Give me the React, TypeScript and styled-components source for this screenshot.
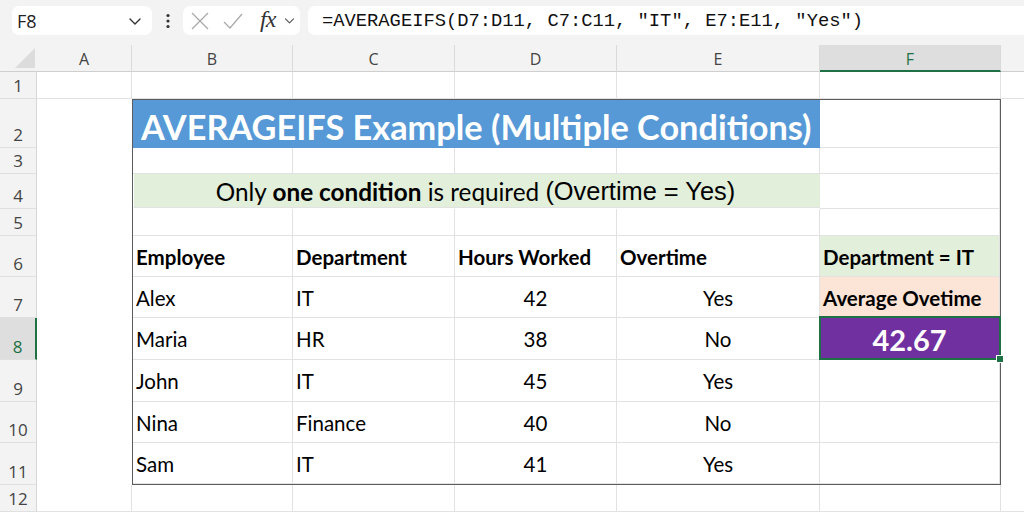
import React from 'react'
import styled, { createGlobalStyle } from 'styled-components'

const GlobalStyle = createGlobalStyle`
  html, body {
    margin: 0;
    padding: 0;
    background: #f3f3f3;
  }
  body {
    width: 1024px;
    height: 512px;
    overflow: hidden;
    font-family: "Open Sans", "Noto Sans", sans-serif;
  }
`

const GREEN = '#1e7145'
const GRID = '#e2e2e2'

const Page = styled.div`
  width: 1024px;
  height: 512px;
  display: flex;
  flex-direction: column;
  overflow: hidden;
`

const Toolbar = styled.div`
  height: 45px;
  flex: none;
  display: flex;
  align-items: flex-start;
  padding: 6px 0 0 12px;
  box-sizing: border-box;
`

const Box = styled.div<{ $w?: number }>`
  height: 29px;
  ${(p) => (p.$w ? `width: ${p.$w}px;` : 'flex: 1;')}
  flex-shrink: 0;
  background: #fff;
  border-radius: 7px;
  display: flex;
  align-items: center;
  box-sizing: border-box;
`

const NameBox = styled(Box)`
  justify-content: space-between;
  padding: 0 9px 0 5px;
  font-size: 18px;
  color: #222;
`

const Kebab = styled.div`
  width: 31px;
  height: 29px;
  display: flex;
  align-items: center;
  justify-content: center;
`

const FxBox = styled(Box)`
  padding: 0 3px 0 7px;
`

const Fx = styled.span`
  font-family: "Liberation Serif", serif;
  font-style: italic;
  font-size: 24px;
  color: #333;
  margin: 0 8px 2px 16px;
  letter-spacing: -1px;
`

const Formula = styled(Box)`
  margin-left: 8px;
  margin-right: -12px;
  padding-left: 14px;
  font-family: "Liberation Mono", monospace;
  font-size: 18.8px;
  color: #111;
  white-space: pre;
`

const Sheet = styled.div`
  display: grid;
  grid-template-columns: 37px 95px 161px 162px 162px 203px 181px 1fr;
  grid-template-rows: 27px 27px 49px 26px 35px 27px 41px 41px 42px 42px 41px 42px 27px;
  background: #fff;
  flex: 1;
`

const Corner = styled.div`
  background: #f3f3f3;
  border-bottom: 1px solid #cfcfcf;
  position: relative;
  box-sizing: border-box;
  &::after {
    content: '';
    position: absolute;
    right: 2px;
    bottom: 3px;
    border-left: 20px solid transparent;
    border-bottom: 20px solid #dcdcdc;
  }
`

const ColHead = styled.div<{ $sel?: boolean }>`
  background: ${(p) => (p.$sel ? '#dedede' : '#f3f3f3')};
  border-right: 1px solid #dadada;
  border-bottom: ${(p) => (p.$sel ? `2px solid ${GREEN}` : '1px solid #cfcfcf')};
  box-sizing: border-box;
  display: flex;
  align-items: center;
  justify-content: center;
  font-size: 16px;
  color: ${(p) => (p.$sel ? GREEN : '#444')};
  padding-top: 2px;
`

const RowHead = styled.div<{ $sel?: boolean }>`
  background: ${(p) => (p.$sel ? '#dedede' : '#f3f3f3')};
  border-bottom: 1px solid #e0e0e0;
  border-right: ${(p) => (p.$sel ? `2px solid ${GREEN}` : '1px solid #d6d6d6')};
  box-sizing: border-box;
  display: flex;
  align-items: flex-end;
  justify-content: center;
  padding-bottom: 4px;
  font-size: 17px;
  line-height: 1;
  color: ${(p) => (p.$sel ? GREEN : '#444')};
`

const GridCell = styled.div`
  border-right: 1px solid ${GRID};
  border-bottom: 1px solid ${GRID};
  box-sizing: border-box;
`

const Blank = styled.div<{ $col: string; $row: string }>`
  grid-column: ${(p) => p.$col};
  grid-row: ${(p) => p.$row};
  background: #fff;
`

const Table = styled.div`
  grid-column: 3 / 8;
  grid-row: 3 / 13;
  border: 1px solid #5c5c5c;
  display: grid;
  grid-template-columns: 160px 162px 162px 203px 180px;
  grid-template-rows: 48px 26px 35px 27px 41px 41px 42px 42px 41px 41px;
`

const Cell = styled.div<{ $bg?: string; $center?: boolean; $bold?: boolean; $span?: number }>`
  grid-column: span ${(p) => p.$span ?? 1};
  background: ${(p) => p.$bg ?? '#fff'};
  border-right: 1px solid ${GRID};
  border-bottom: 1px solid ${GRID};
  box-sizing: border-box;
  display: flex;
  align-items: center;
  justify-content: ${(p) => (p.$center ? 'center' : 'flex-start')};
  padding: 1px 3px 0;
  font-family: Lato, "Open Sans", sans-serif;
  font-size: 20.5px;
  font-weight: ${(p) => (p.$bold ? 700 : 400)};
  color: #000;
  white-space: nowrap;
`

const Title = styled(Cell)`
  background: #5699d6;
  border-right: none;
  border-bottom: none;
  color: #fff;
  font-size: 34.3px;
  font-weight: 700;
  padding: 4px 0 0 8px;
`

const Note = styled(Cell)`
  background: #e2efda;
  border-right: none;
  margin: 0 0 1px 1px;
  justify-content: center;
  padding-left: 0;
  font-size: 24.3px;
  b {
    font-weight: 700;
  }
`

const Arial = styled.span`
  font-family: "Liberation Sans", Arial, sans-serif;
  font-size: 25.4px;
`

const Result = styled(Cell)`
  background: #7030a0;
  color: #fff;
  font-size: 29px;
  font-weight: 700;
  position: relative;
  &::after {
    content: '';
    position: absolute;
    inset: -2px -2px -1px -1px;
    border: 2px solid ${GREEN};
  }
  &::before {
    content: '';
    position: absolute;
    right: -5px;
    bottom: -4px;
    width: 6px;
    height: 6px;
    background: ${GREEN};
    border: 1px solid #fff;
    z-index: 2;
  }
`

const Chevron = ({ size = 14, color = '#333' }: { size?: number; color?: string }) => (
  <svg width={size} height={size} viewBox="0 0 16 16" fill="none">
    <path d="M3 6l5 5 5-5" stroke={color} strokeWidth="1.4" strokeLinecap="round" strokeLinejoin="round" />
  </svg>
)

const columns = ['A', 'B', 'C', 'D', 'E', 'F']

const rows = [
  ['Alex', 'IT', '42', 'Yes'],
  ['Maria', 'HR', '38', 'No'],
  ['John', 'IT', '45', 'Yes'],
  ['Nina', 'Finance', '40', 'No'],
  ['Sam', 'IT', '41', 'Yes'],
]

export default function App() {
  return (
    <Page>
      <GlobalStyle />
      <Toolbar>
        <NameBox $w={140}>
          <span>F8</span>
          <Chevron size={16} />
        </NameBox>
        <Kebab>
          <svg width="6" height="16" viewBox="0 0 6 16">
            <circle cx="3" cy="2.5" r="1.6" fill="#333" />
            <circle cx="3" cy="8" r="1.6" fill="#333" />
            <circle cx="3" cy="13.5" r="1.6" fill="#333" />
          </svg>
        </Kebab>
        <FxBox $w={117}>
          <svg width="20" height="20" viewBox="0 0 20 20">
            <path d="M2 2l16 16M18 2L2 18" stroke="#a8a8a8" strokeWidth="1.2" />
          </svg>
          <svg width="22" height="18" viewBox="0 0 22 18" style={{ marginLeft: 12 }}>
            <path d="M2 10l6 6L20 2" stroke="#a8a8a8" strokeWidth="1.2" fill="none" />
          </svg>
          <Fx>fx</Fx>
          <Chevron size={13} color="#555" />
        </FxBox>
        <Formula>{'=AVERAGEIFS(D7:D11, C7:C11, "IT", E7:E11, "Yes")'}</Formula>
      </Toolbar>

      <Sheet>
        <Corner />
        {columns.map((c) => (
          <ColHead key={c} $sel={c === 'F'}>
            {c}
          </ColHead>
        ))}
        <ColHead style={{ borderRight: 'none' }} />

        {Array.from({ length: 12 }, (_, i) => (
          <RowHead key={i} $sel={i + 1 === 8} style={{ gridColumn: 1, gridRow: i + 2 }}>
            {i + 1}
          </RowHead>
        ))}

        {columns.map((c) => (
          <GridCell key={'r1' + c} />
        ))}
        <GridCell style={{ borderRight: 'none' }} />

        <Blank $col="2" $row="3 / 13" />
        <Table>
          <Title $span={4}>AVERAGEIFS Example (Multiple Conditions)</Title>
          <Cell />

          <Cell />
          <Cell />
          <Cell />
          <Cell />
          <Cell />

          <Note $span={4}>
            Only&nbsp;<b>one condition</b>&nbsp;is required&nbsp;<Arial>(Overtime = Yes)</Arial>
          </Note>
          <Cell />

          <Cell />
          <Cell />
          <Cell />
          <Cell />
          <Cell />

          <Cell $bold>Employee</Cell>
          <Cell $bold>Department</Cell>
          <Cell $bold>Hours Worked</Cell>
          <Cell $bold>Overtime</Cell>
          <Cell $bold $bg="#e2efda">Department = IT</Cell>

          {rows.map((r, i) => (
            <React.Fragment key={r[0]}>
              <Cell>{r[0]}</Cell>
              <Cell>{r[1]}</Cell>
              <Cell $center>{r[2]}</Cell>
              <Cell $center>{r[3]}</Cell>
              {i === 0 && (
                <Cell $bold $bg="#fce4d6">
                  Average Ovetime
                </Cell>
              )}
              {i === 1 && <Result $center>42.67</Result>}
              {i > 1 && <Cell />}
            </React.Fragment>
          ))}
        </Table>
        <Blank $col="8" $row="3 / 13" />

        {columns.map((c) => (
          <GridCell key={'r12' + c} style={{ gridRow: 13 }} />
        ))}
        <GridCell style={{ gridRow: 13, borderRight: 'none' }} />
      </Sheet>
    </Page>
  )
}
